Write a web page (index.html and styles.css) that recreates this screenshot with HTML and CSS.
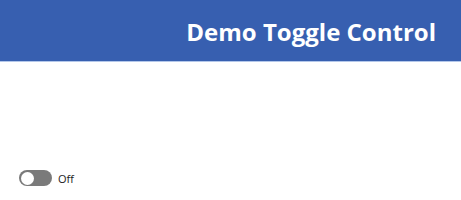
FILE: index.html
```html
<!DOCTYPE html>
<html>
<head>
<meta charset="utf-8">
<link rel="stylesheet" href="styles.css">
</head>
<body>
<header class="header"><h1 class="title">Demo Toggle Control</h1></header>
<main class="content">
  <label class="toggle">
    <span class="track"><span class="knob"></span></span>
    <span class="label">Off</span>
  </label>
</main>
</body>
</html>
```
FILE: styles.css
```css
html, body { margin: 0; padding: 0; background: #fff; }
body { width: 461px; height: 200px; overflow: hidden; font-family: "Open Sans", "Noto Sans", sans-serif; }
.header {
  height: 62px;
  background: #375fb0;
  border-bottom: 1px solid #b3c7ea;
  display: flex;
  align-items: center;
  justify-content: flex-end;
  padding-right: 25px;
  box-sizing: border-box;
}
.title { margin: 0; color: #fff; font-size: 24px; font-weight: 700; line-height: 1; padding-top: 3px; }
.content { padding: 108px 0 0 19px; }
.toggle { display: flex; align-items: center; gap: 6px; }
.track {
  width: 33px; height: 16px; border-radius: 8px; background: #7a7a7a;
  display: flex; align-items: center; padding-left: 2px; box-sizing: border-box;
}
.knob { width: 13px; height: 13px; border-radius: 50%; background: #fff; }
.label { font-size: 11px; color: #222; font-family: "Open Sans", sans-serif; }
```
